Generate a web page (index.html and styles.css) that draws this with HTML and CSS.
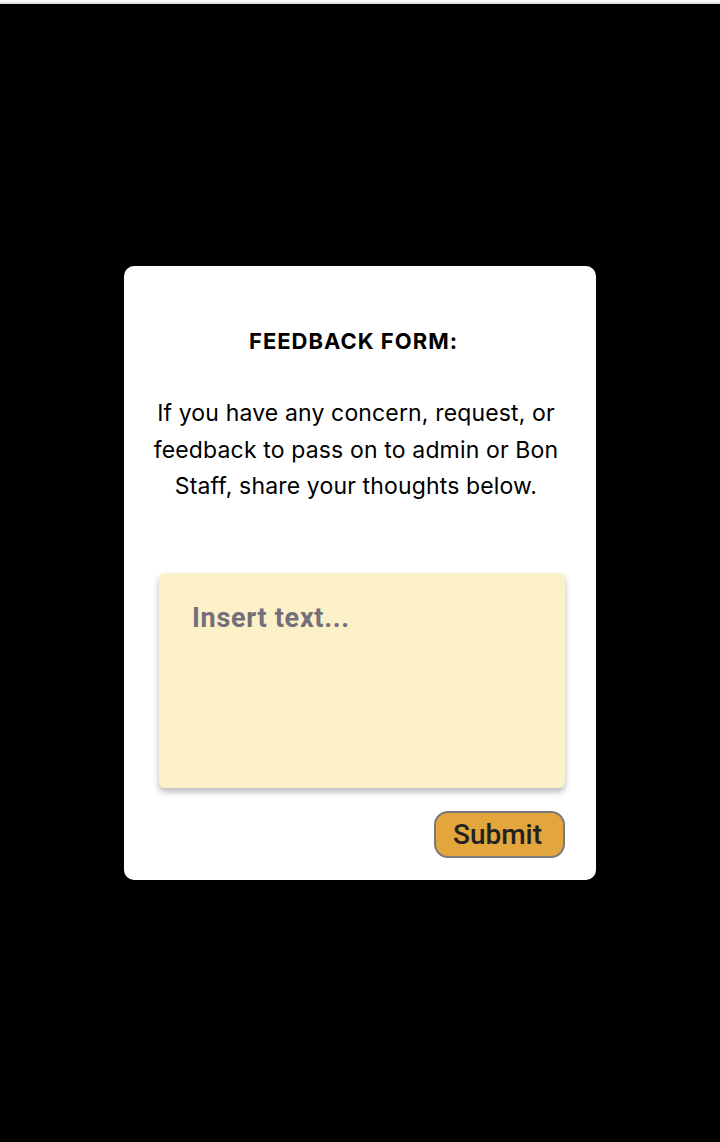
FILE: index.html
```html
<!DOCTYPE html>
<html lang="en">
<head>
<meta charset="utf-8">
<title>Feedback Form</title>
<link rel="stylesheet" href="styles.css">
</head>
<body>
<div class="topbar"></div>
<main class="stage">
  <section class="card">
    <div class="intro">
      <h1 class="title">FEEDBACK FORM:</h1>
      <p class="lead">If you have any concern, request, or feedback to pass on to admin or Bon Staff, share your thoughts below.</p>
    </div>
    <form class="form">
      <textarea class="field" placeholder="Insert text..."></textarea>
      <div class="actions">
        <button type="button" class="submit">Submit</button>
      </div>
    </form>
  </section>
</main>
</body>
</html>
```
FILE: styles.css
```css
* { box-sizing: border-box; }
html, body { margin: 0; padding: 0; }
body {
  background: #000;
  height: 1142px;
  display: flex;
  flex-direction: column;
  font-family: Inter, "Liberation Sans", sans-serif;
}
.topbar {
  height: 4px;
  background: #fafafa;
  border-bottom: 2px solid #e4e4e4;
  flex: none;
}
.stage {
  flex: 1;
  display: flex;
  align-items: center;
  justify-content: center;
}
.card {
  width: 472px;
  height: 614px;
  background: #fff;
  border-radius: 10px;
  padding: 63px 0 22px 0;
  display: flex;
  flex-direction: column;
}
.intro {
  padding: 0 30px 0 22px;
  text-align: center;
  color: #000;
}
.title {
  margin: 0;
  padding-right: 5px;
  font-size: 22px;
  line-height: 24px;
  font-weight: 700;
  letter-spacing: 1px;
}
.lead {
  margin: 42px 0 0 0;
  font-size: 23px;
  line-height: 36.5px;
  font-weight: 400;
  letter-spacing: 0.15px;
}
.form {
  margin-top: 68px;
  padding: 0 31px 0 35px;
  display: flex;
  flex-direction: column;
}
.field {
  display: block;
  width: 406px;
  height: 215px;
  border: none;
  outline: none;
  resize: none;
  background: #fcf0c8;
  border-radius: 6px;
  box-shadow: 0 4px 6px rgba(0, 0, 0, 0.28);
  padding: 29px 33px;
  font-family: Roboto, "Liberation Sans", sans-serif;
  font-size: 27px;
  font-weight: 700;
  letter-spacing: 0.7px;
  color: #333;
}
.field::placeholder {
  color: #746f78;
  opacity: 1;
}
.actions {
  margin-top: 23px;
  display: flex;
  justify-content: flex-end;
}
.submit {
  width: 131px;
  height: 47px;
  background: #e2a63c;
  border: 2px solid #7a7a7a;
  border-radius: 14px;
  padding: 0 4px 0 0;
  font-family: Roboto, "Liberation Sans", sans-serif;
  font-size: 28px;
  font-weight: 500;
  color: #222;
  cursor: pointer;
}
```
